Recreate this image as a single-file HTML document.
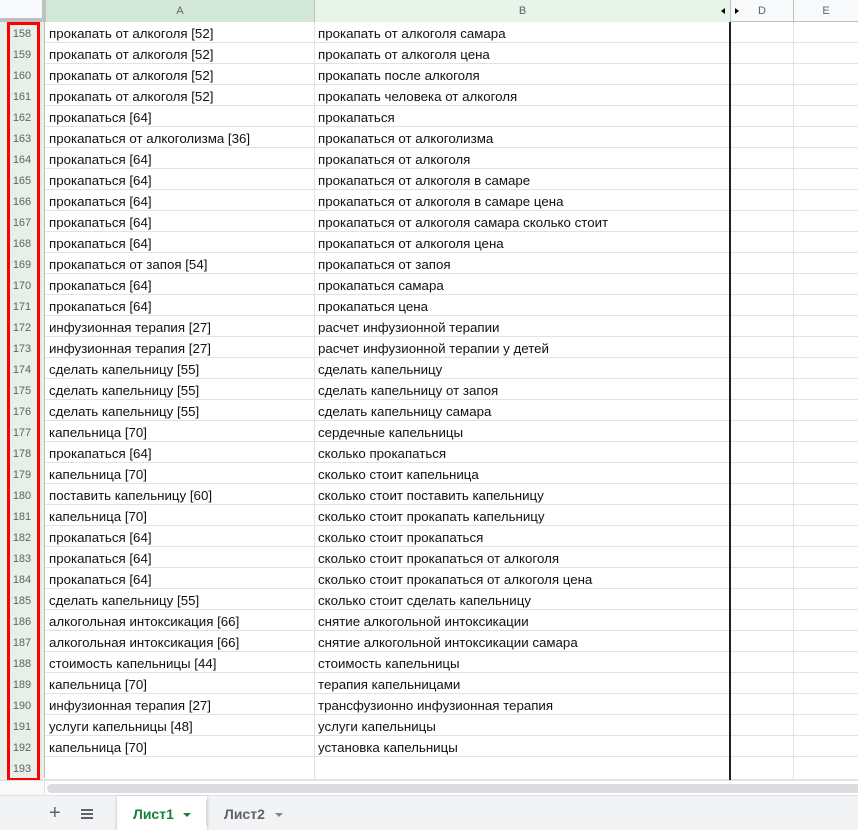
<!DOCTYPE html>
<html><head><meta charset="utf-8"><style>
*{margin:0;padding:0;box-sizing:border-box}
body{width:858px;height:830px;overflow:hidden;background:#fff;font-family:"Liberation Sans",Arial,sans-serif;position:relative}
.hdr{position:absolute;top:0;left:0;width:858px;height:22px;background:#f8f9fa;border-bottom:1px solid #c0c0c0}
.hc{position:absolute;top:0;height:22px;font-size:11px;color:#5f6368;text-align:center;line-height:22px;border-right:1px solid #c0c0c0}
.row{position:absolute;left:0;width:858px;height:21px;border-bottom:1px solid #e2e2e2;font-size:13.3px;color:#111;line-height:20px}
.rn{position:absolute;left:0;width:45px;height:21px;background:#e6efe8;border-right:1px solid #c0c0c0;color:#5f6368;font-size:11px;text-align:center;line-height:20px;padding-top:2px}
.a{position:absolute;left:49px;top:2px}
.b{position:absolute;left:318px;top:2px}
.vl{position:absolute;top:22px;height:758px;width:1px;background:#e2e2e2}
</style></head><body>
<div class="hdr">
<div class="hc" style="left:0;width:46px;background:#f8f9fa;border-right:4px solid #c0c0c0;border-bottom:4px solid #c0c0c0;height:22px"></div>
<div class="hc" style="left:46px;width:269px;background:#d3e8d9;color:#5f6368">A</div>
<div class="hc" style="left:315px;width:416px;background:#e6f4ea">B</div>
<div style="position:absolute;left:721px;top:8px;width:0;height:0;border-top:3px solid transparent;border-bottom:3px solid transparent;border-right:4px solid #000"></div>
<div style="position:absolute;left:735px;top:8px;width:0;height:0;border-top:3px solid transparent;border-bottom:3px solid transparent;border-left:4px solid #000"></div>
<div class="hc" style="left:731px;width:63px">D</div>
<div class="hc" style="left:794px;width:64px;border-right:none">E</div>
</div>
<div id="rows"></div>
<div class="vl" style="left:314px"></div>
<div style="position:absolute;left:729px;top:22px;width:2px;height:758px;background:#1f1f1f"></div>
<div class="vl" style="left:793px"></div>
<div style="position:absolute;left:7px;top:22px;width:33px;height:759px;border:3px solid #f00"></div>
<div style="position:absolute;left:0;top:780px;width:858px;height:15px;background:#fff;border-top:1px solid #e2e2e2"></div>
<div style="position:absolute;left:0;top:781px;width:45px;height:14px;background:#f8f9fa;border-right:1px solid #e2e2e2"></div>
<div style="position:absolute;left:47px;top:784px;width:820px;height:9px;background:#dadce0;border-radius:5px"></div>
<div style="position:absolute;left:0;top:795px;width:858px;height:35px;background:#f1f3f4;border-top:1px solid #e0e0e0"></div>
<div style="position:absolute;left:49px;top:801px;font-size:20px;color:#5f6368;line-height:24px">+</div>
<div style="position:absolute;left:81px;top:809px;width:12px;height:10px;border-top:2px solid #5f6368;border-bottom:2px solid #5f6368"></div>
<div style="position:absolute;left:81px;top:813px;width:12px;height:2px;background:#5f6368"></div>
<div style="position:absolute;left:117px;top:796px;width:90px;height:34px;background:#fff;box-shadow:0 1px 3px rgba(0,0,0,.25)"></div>
<div style="position:absolute;left:133px;top:806px;font-size:14px;font-weight:bold;color:#188038">Лист1</div>
<div style="position:absolute;left:183px;top:813px;border-left:4px solid transparent;border-right:4px solid transparent;border-top:4px solid #188038"></div>
<div style="position:absolute;left:224px;top:806px;font-size:14px;font-weight:bold;color:#5f6368">Лист2</div>
<div style="position:absolute;left:275px;top:813px;border-left:4px solid transparent;border-right:4px solid transparent;border-top:4px solid #80868b"></div>
<div style="position:absolute;left:206px;top:800px;width:1px;height:26px;background:#dadce0"></div>
<script>
var d=[["прокапать от алкоголя [52]","прокапать от алкоголя самара"],["прокапать от алкоголя [52]","прокапать от алкоголя цена"],["прокапать от алкоголя [52]","прокапать после алкоголя"],["прокапать от алкоголя [52]","прокапать человека от алкоголя"],["прокапаться [64]","прокапаться"],["прокапаться от алкоголизма [36]","прокапаться от алкоголизма"],["прокапаться [64]","прокапаться от алкоголя"],["прокапаться [64]","прокапаться от алкоголя в самаре"],["прокапаться [64]","прокапаться от алкоголя в самаре цена"],["прокапаться [64]","прокапаться от алкоголя самара сколько стоит"],["прокапаться [64]","прокапаться от алкоголя цена"],["прокапаться от запоя [54]","прокапаться от запоя"],["прокапаться [64]","прокапаться самара"],["прокапаться [64]","прокапаться цена"],["инфузионная терапия [27]","расчет инфузионной терапии"],["инфузионная терапия [27]","расчет инфузионной терапии у детей"],["сделать капельницу [55]","сделать капельницу"],["сделать капельницу [55]","сделать капельницу от запоя"],["сделать капельницу [55]","сделать капельницу самара"],["капельница [70]","сердечные капельницы"],["прокапаться [64]","сколько прокапаться"],["капельница [70]","сколько стоит капельница"],["поставить капельницу [60]","сколько стоит поставить капельницу"],["капельница [70]","сколько стоит прокапать капельницу"],["прокапаться [64]","сколько стоит прокапаться"],["прокапаться [64]","сколько стоит прокапаться от алкоголя"],["прокапаться [64]","сколько стоит прокапаться от алкоголя цена"],["сделать капельницу [55]","сколько стоит сделать капельницу"],["алкогольная интоксикация [66]","снятие алкогольной интоксикации"],["алкогольная интоксикация [66]","снятие алкогольной интоксикации самара"],["стоимость капельницы [44]","стоимость капельницы"],["капельница [70]","терапия капельницами"],["инфузионная терапия [27]","трансфузионно инфузионная терапия"],["услуги капельницы [48]","услуги капельницы"],["капельница [70]","установка капельницы"],["",""]];
var h="";for(var i=0;i<d.length;i++){h+='<div class="row" style="top:'+(22+i*21)+'px;'+(i==35?'height:23px':'')+'"><div class="rn">'+(158+i)+'</div><span class="a">'+d[i][0]+'</span><span class="b">'+d[i][1]+'</span></div>';}
document.getElementById("rows").innerHTML=h;
</script>
</body></html>
